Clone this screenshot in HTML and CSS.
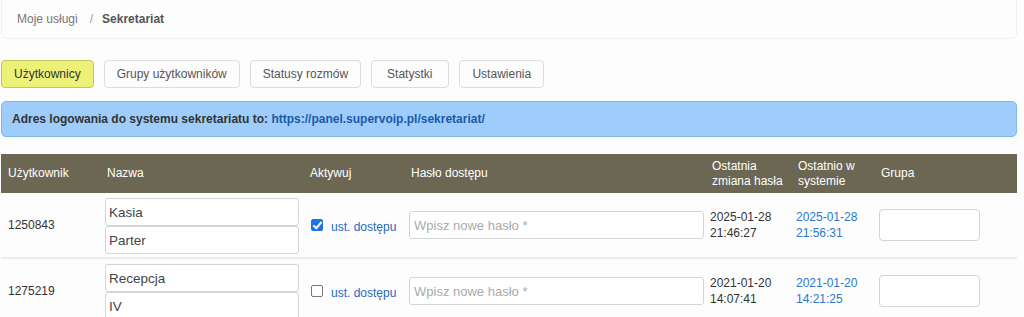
FILE: index.html
```html
<!DOCTYPE html>
<html lang="pl">
<head>
<meta charset="utf-8">
<title>Sekretariat</title>
<link rel="stylesheet" href="styles.css">
</head>
<body>
<div class="page">
  <nav class="crumbs">
    <span class="crumb">Moje usługi</span>
    <span class="sep">/</span>
    <span class="crumb current">Sekretariat</span>
  </nav>

  <div class="tabs">
    <button class="tab active">Użytkownicy</button>
    <button class="tab">Grupy użytkowników</button>
    <button class="tab">Statusy rozmów</button>
    <button class="tab wide">Statystki</button>
    <button class="tab">Ustawienia</button>
  </div>

  <div class="info">Adres logowania do systemu sekretariatu to: <a href="#">https://panel.supervoip.pl/sekretariat/</a></div>

  <table class="users">
    <colgroup>
      <col class="c1"><col class="c2"><col class="c3"><col class="c4"><col class="c5"><col class="c6"><col class="c7">
    </colgroup>
    <thead>
      <tr>
        <th>Użytkownik</th>
        <th>Nazwa</th>
        <th>Aktywuj</th>
        <th>Hasło dostępu</th>
        <th>Ostatnia zmiana hasła</th>
        <th>Ostatnio w systemie</th>
        <th>Grupa</th>
      </tr>
    </thead>
    <tbody>
      <tr>
        <td class="id">1250843</td>
        <td class="names"><input class="field" value="Kasia"><input class="field" value="Parter"></td>
        <td class="act"><label><span class="cb checked"></span><a href="#">ust. dostępu</a></label></td>
        <td><input class="field pass" placeholder="Wpisz nowe hasło *"></td>
        <td class="date">2025-01-28<br>21:46:27</td>
        <td class="date link"><a href="#">2025-01-28<br>21:56:31</a></td>
        <td><input class="field group"></td>
      </tr>
      <tr>
        <td class="id">1275219</td>
        <td class="names"><input class="field" value="Recepcja"><input class="field" value="IV"></td>
        <td class="act"><label><span class="cb"></span><a href="#">ust. dostępu</a></label></td>
        <td><input class="field pass" placeholder="Wpisz nowe hasło *"></td>
        <td class="date">2021-01-20<br>14:07:41</td>
        <td class="date link"><a href="#">2021-01-20<br>14:21:25</a></td>
        <td><input class="field group"></td>
      </tr>
    </tbody>
  </table>
</div>
</body>
</html>
```
FILE: styles.css
```css
html, body {
  margin: 0;
  padding: 0;
  background: #fdfdfd;
}
body {
  font-family: "Liberation Sans", Arial, sans-serif;
  font-size: 12px;
  color: #333;
}
.page {
  padding: 0 7px 0 1px;
}
.crumbs {
  height: 38px;
  border: 1px solid #eef0f0;
  border-top: none;
  border-radius: 0 0 6px 6px;
  display: flex;
  align-items: center;
  padding-left: 15px;
  background: #fdfdfd;
}
.crumb { color: #777; }
.sep { color: #999; margin: 0 9px 0 12px; }
.crumb.current { font-weight: bold; color: #555; }

.tabs {
  display: flex;
  gap: 10px;
  margin-top: 21px;
}
.tab {
  font-family: inherit;
  font-size: 12px;
  height: 28px;
  padding: 0 12px;
  border: 1px solid #dcdcdc;
  border-radius: 4px;
  background: #fdfdfd;
  color: #555;
}
.tab.wide { padding: 0 16px 0 15px; }
.tab.active {
  background: #eef177;
  border-color: #c4c45c;
  color: #333;
}

.info {
  margin-top: 13px;
  height: 34px;
  line-height: 34px;
  padding-left: 10px;
  background: #9fcdfb;
  border: 1px solid #7db8ea;
  border-radius: 5px;
  font-weight: bold;
  color: #333;
}
.info a { color: #1a5aa8; text-decoration: none; }

.users {
  margin-top: 17px;
  width: 1016px;
  border-collapse: collapse;
  table-layout: fixed;
}
col.c1 { width: 99px; }
col.c2 { width: 203px; }
col.c3 { width: 101px; }
col.c4 { width: 301px; }
col.c5 { width: 86px; }
col.c6 { width: 83px; }
col.c7 { width: 143px; }

.users th {
  background: #6b6753;
  color: #fff;
  font-weight: normal;
  text-align: left;
  height: 39px;
  padding: 0 7px;
  line-height: 15px;
  vertical-align: middle;
}
.users td {
  padding: 5px 5px;
  vertical-align: middle;
  border-bottom: 2px solid #ececec;
  height: 54px;
}
.users td.id { padding-left: 7px; }
.users td.names { padding: 5px 5px 3px 5px; }
.users td.act { padding-left: 8px; }

.field {
  display: block;
  box-sizing: border-box;
  font-family: inherit;
  font-size: 13.5px;
  color: #444;
  height: 28px;
  width: 194px;
  padding: 0 3px;
  border: 1px solid #d4d4d4;
  border-radius: 3px;
  background: #fff;
}
.field::placeholder { color: #aaa; font-size: 13px; }
.field.pass { width: 295px; padding-left: 4px; }
.field.group { width: 101px; height: 32px; border-radius: 4px; }

.act label {
  display: flex;
  align-items: center;
}
.act a {
  color: #1d6ac0;
  text-decoration: none;
  margin-left: 8px;
  padding-top: 4px;
}
.cb {
  box-sizing: border-box;
  width: 12px;
  height: 12px;
  border: 1px solid #767676;
  border-radius: 2px;
  background: #fff;
  position: relative;
}
.cb.checked {
  background: #1a73e8;
  border-color: #1a73e8;
}
.cb.checked::after {
  content: "";
  position: absolute;
  left: 3px;
  top: 0px;
  width: 3px;
  height: 7px;
  border: solid #fff;
  border-width: 0 2px 2px 0;
  transform: rotate(40deg);
}
.date {
  line-height: 16px;
  color: #333;
}
.date a { color: #2a79cc; text-decoration: none; }
```
